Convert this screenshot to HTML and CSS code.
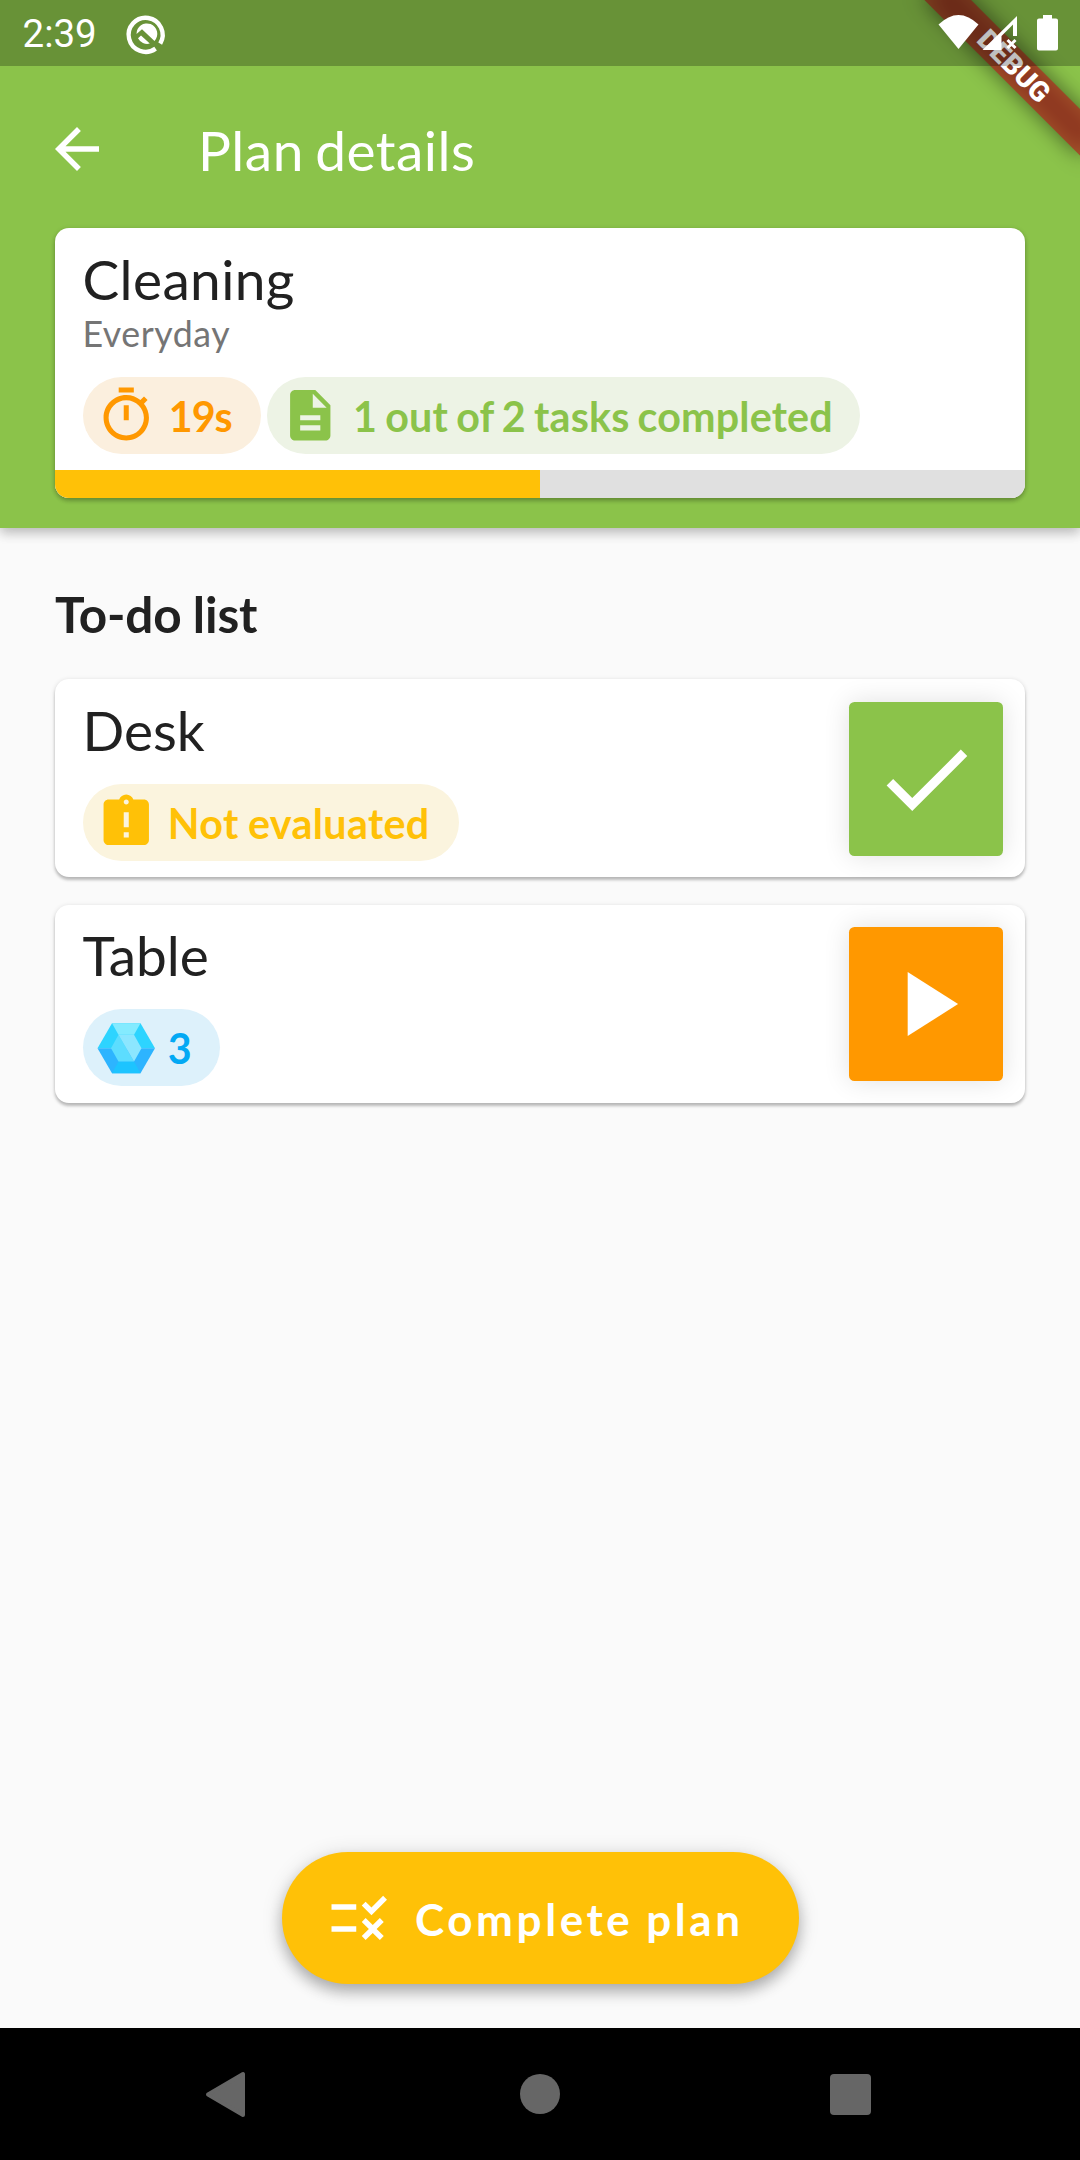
FILE: index.html
```html
<!DOCTYPE html>
<html lang="en">
<head>
<meta charset="utf-8">
<title>Plan details</title>
<link rel="stylesheet" href="styles.css">
</head>
<body>
<div class="screen">
  <header class="header">
    <div class="banner-shadow"></div>
    <div class="banner">DEBUG</div>
    <div class="status">
      <span class="clock">2:39</span>
      <svg class="status-app" viewBox="0 0 40 40"><g fill="none" stroke="#fff"><path d="M28.6 34.6A17 17 0 1 1 33.2 29.6" stroke-width="4.4"/></g><path fill="#fff" d="M9.5 20A10.4 10.4 0 1 1 27.5 26.9L15 15.2ZM11 24.3 14 21.5 22.8 29.6A10.4 10.4 0 0 1 11 24.3Z"/></svg>
      <svg class="status-icons" viewBox="0 0 124 40"><g fill="#fff"><path d="M.5 10.500Q20.500-8.500 40.500 10.500L20.500 35Z"/><path fill-rule="evenodd" d="M79 2V22H75V10.500L63.500 22V36H44.500Z"/><path d="M69.500 26 77.500 34M77.500 26 69.500 34" stroke="#fff" stroke-width="3"/><path d="M105 1h9v3.500h4a2 2 0 0 1 2 2V34.500a2 2 0 0 1-2 2h-17a2 2 0 0 1-2-2V6.500a2 2 0 0 1 2-2h4z"/></g></svg>
    </div>
    <div class="appbar">
      <svg class="icon-24" viewBox="0 0 24 24"><path fill="#fff" d="M20 11H7.830l5.590-5.590L12 4l-8 8 8 8 1.410-1.410L7.830 13H20v-2z"/></svg>
      <h1 class="title">Plan details</h1>
    </div>
    <section class="summary">
      <div class="summary-body">
        <h2 class="name summary-name">Cleaning</h2>
        <p class="schedule">Everyday</p>
        <div class="chips">
          <span class="chip orange"><svg class="icon-22" viewBox="0 0 24 24"><path fill="currentColor" d="M15 1H9v2h6V1zm-4 13h2V8h-2v6zm8.030-6.610l1.420-1.420c-.43-.51-.9-.99-1.410-1.410l-1.420 1.420C16.070 4.740 14.120 4 12 4c-4.970 0-9 4.030-9 9s4.020 9 9 9 9-4.030 9-9c0-2.120-.74-4.070-1.970-5.610zM12 20c-3.870 0-7-3.130-7-7s3.130-7 7-7 7 3.130 7 7-3.130 7-7 7z"/></svg>19s</span>
          <span class="chip green"><svg class="icon-22" viewBox="0 0 24 24"><path fill="currentColor" d="M14 2H6c-1.100 0-1.990.9-1.990 2L4 20c0 1.100.89 2 1.990 2H18c1.100 0 2-.9 2-2V8l-6-6zm2 16H8v-2h8v2zm0-4H8v-2h8v2zm-3-5V3.500L18.500 9H13z"/></svg>1 out of 2 tasks completed</span>
        </div>
      </div>
      <div class="progress"><div class="progress-fill" style="width:50%"></div></div>
    </section>
  </header>
  <main class="content">
    <h2 class="section">To-do list</h2>
    <article class="task">
      <div class="task-info">
        <h3 class="name">Desk</h3>
        <span class="chip amber"><svg class="icon-22" viewBox="0 0 24 24"><path fill="currentColor" d="M19 3h-4.180C14.400 1.840 13.300 1 12 1c-1.300 0-2.400.84-2.820 2H5c-1.100 0-2 .9-2 2v14c0 1.100.9 2 2 2h14c1.100 0 2-.9 2-2V5c0-1.100-.9-2-2-2zm-6 15h-2v-2h2v2zm0-4h-2V8h2v6zm-1-9c-.55 0-1-.45-1-1s.45-1 1-1 1 .45 1 1-.45 1-1 1z"/></svg><span class="amber-label">Not evaluated</span></span>
      </div>
      <div class="action done"><svg class="icon-40" viewBox="0 0 24 24"><path fill="#fff" d="M9 16.170L4.830 12l-1.420 1.410L9 19 21 7l-1.410-1.410z"/></svg></div>
    </article>
    <article class="task">
      <div class="task-info">
        <h3 class="name">Table</h3>
        <span class="chip blue"><svg class="icon-22" viewBox="0 0 60.5 60.5"><path fill="#2dd4ff" d="M1.500 30.200 16 5.200H44.500L59 30.200Z"/><path fill="#2db4ff" d="M1.500 30.200H59L44.500 55.200H16Z"/><path fill="#84ebff" d="M16 5.200H44.500L38 16.700H22.500Z"/><path fill="#1dc4ff" d="M22.500 43.500H38L44.500 55.200H16Z"/><path fill="#5cddff" d="M22.500 16.700 15 30.200 22.500 43.500H38Z"/><path fill="#8ce6ff" d="M22.500 16.700H38L45.500 30.200 38 43.500Z"/></svg>3</span>
      </div>
      <div class="action start"><svg class="icon-40" viewBox="0 0 24 24"><path fill="#fff" d="M8 5v14l11-7z"/></svg></div>
    </article>
    <div class="fab"><svg class="icon-24" viewBox="0 0 24 24"><path fill="#fff" d="M16.540 11L13 7.460l1.410-1.410 2.120 2.120 4.240-4.240 1.410 1.410L16.540 11zM11 7H2v2h9V7zm10 6.410L19.590 12 17 14.590 14.410 12 13 13.410 15.590 16 13 18.590 14.410 20 17 17.410 19.590 20 21 18.590 18.410 16 21 13.410zM11 15H2v2h9v-2z"/></svg><span class="fab-label">Complete plan</span></div>
  </main>
  <nav class="navbar">
    <svg class="nav-icon" viewBox="0 0 48 48"><path fill="#666" stroke="#666" stroke-width="4" stroke-linejoin="round" d="M4 24.500 39 4V45Z"/></svg>
    <svg class="nav-icon" viewBox="0 0 48 48"><circle fill="#666" cx="24" cy="24" r="20"/></svg>
    <svg class="nav-icon" viewBox="0 0 48 48"><rect fill="#666" x="2" y="4" width="41" height="41" rx="4"/></svg>
  </nav>
</div>
</body>
</html>
```
FILE: styles.css
```css
* { box-sizing: border-box; margin: 0; }
body { font-family: Lato, sans-serif; color: #212121; background: #fafafa; }
svg { display: block; flex: none; overflow: visible; }
.screen { width: 1080px; height: 2160px; display: flex; flex-direction: column; overflow: hidden; }

.header { position: relative; height: 528px; flex: none; padding-bottom: 30px; background: #8bc34a; display: flex; flex-direction: column; box-shadow: 0 5px 11px rgba(0,0,0,.2), 0 2px 14px rgba(0,0,0,.1); }
.status { position: relative; height: 66px; flex: none; padding: 2px 18px 0 22.5px; display: flex; align-items: center; background: rgba(0,0,0,.25); }
.clock { font: 400 38.5px/66px Roboto, sans-serif; color: #fff; width: 104.5px; }
.status-app { width: 40px; height: 40px; }
.status-icons { width: 124px; height: 40px; margin-left: auto; }
.banner, .banner-shadow { position: absolute; left: 970px; top: 77px; width: 220px; height: 33px; transform-origin: 110px -77px; transform: rotate(45deg); }
.banner-shadow { background: rgba(0,0,0,.5); filter: blur(10.9px); }
.banner { background: rgba(183,28,28,.63); color: #fff; font: 900 28px/33px Roboto, sans-serif; text-align: center; }

.appbar { height: 162px; flex: none; padding: 4px 44px 0; display: flex; align-items: center; gap: 88px; }
.icon-24 { width: 66px; height: 66px; }
.icon-22 { width: 60.5px; height: 60.5px; }
.icon-40 { width: 110px; height: 110px; }
.title { padding-top: 2px; font-size: 55px; font-weight: 400; color: #fff; line-height: 66px; letter-spacing: .5px; word-spacing: -3.3px; }

.summary { height: 270px; margin: 0 55px; background: #fff; border-radius: 14px; overflow: hidden; display: flex; flex-direction: column; justify-content: space-between; box-shadow: 0 3px 4px rgba(0,0,0,.2), 0 1px 5px rgba(0,0,0,.15); }
.summary-body { padding: 18px 27.5px 0; }
.name { font-size: 55px; font-weight: 400; line-height: 66px; }
.summary-name { letter-spacing: .38px; }
.schedule { font-size: 35.75px; line-height: 43px; letter-spacing: .54px; color: #757575; }
.chips { display: flex; gap: 5.5px; margin-top: 22px; }
.chip { display: inline-flex; align-items: center; gap: 11px; height: 77px; padding: 0 27.5px 0 13.75px; border-radius: 38.5px; font-size: 41.25px; font-weight: 700; white-space: nowrap; }
.orange { color: #ff9800; background: #fbefde; gap: 12px; padding-right: 29.5px; letter-spacing: -1px; }
.green { color: #8bc34a; background: #edf3e5; gap: 12px; letter-spacing: .15px; word-spacing: -2px; }
.amber { color: #ffc107; background: #fbf4de; padding-right: 29px; letter-spacing: .35px; word-spacing: -1px; }
.amber-label { padding-top: 2px; }
.blue { color: #03a9f4; background: #ddf1fb; padding-right: 28.5px; }
.progress { height: 28px; background: #e0e0e0; }
.progress-fill { height: 100%; background: #ffc107; }

.content { flex: 1; display: flex; flex-direction: column; padding: 56px 55px 44px; }
.section { font-size: 49.5px; font-weight: 700; line-height: 60px; margin-bottom: 35.4px; letter-spacing: -.1px; word-spacing: -.8px; }
.task { height: 198px; margin-bottom: 27.5px; padding: 0 22px 0 27.5px; display: flex; align-items: center; justify-content: space-between; background: #fff; border-radius: 14px; box-shadow: 0 3px 3px rgba(0,0,0,.2), 0 1px 5px rgba(0,0,0,.14); }
.task-info { height: 163px; }
.task .name { margin-bottom: 21px; }
.action { width: 154px; height: 154px; margin-top: .4px; display: flex; align-items: center; justify-content: center; border-radius: 5.5px; box-shadow: 0 0 27px rgba(0,0,0,.12); }
.done { background: #8bc34a; }
.start { background: #ff9800; }
.fab { margin: auto auto 0; width: 517px; height: 132px; padding-left: 44px; display: flex; align-items: center; gap: 23.5px; border-radius: 66px; background: #ffc107; color: #fff; font-size: 44px; font-weight: 700; letter-spacing: 3.6px; word-spacing: -1.6px; white-space: nowrap; box-shadow: 0 8px 14px rgba(0,0,0,.24), 0 3px 22px rgba(0,0,0,.14); }
.fab-label { padding-top: 2px; }

.navbar { height: 132px; flex: none; padding: 0 204px; display: flex; align-items: center; justify-content: space-between; background: #000; }
.nav-icon { width: 48px; height: 48px; }
```
